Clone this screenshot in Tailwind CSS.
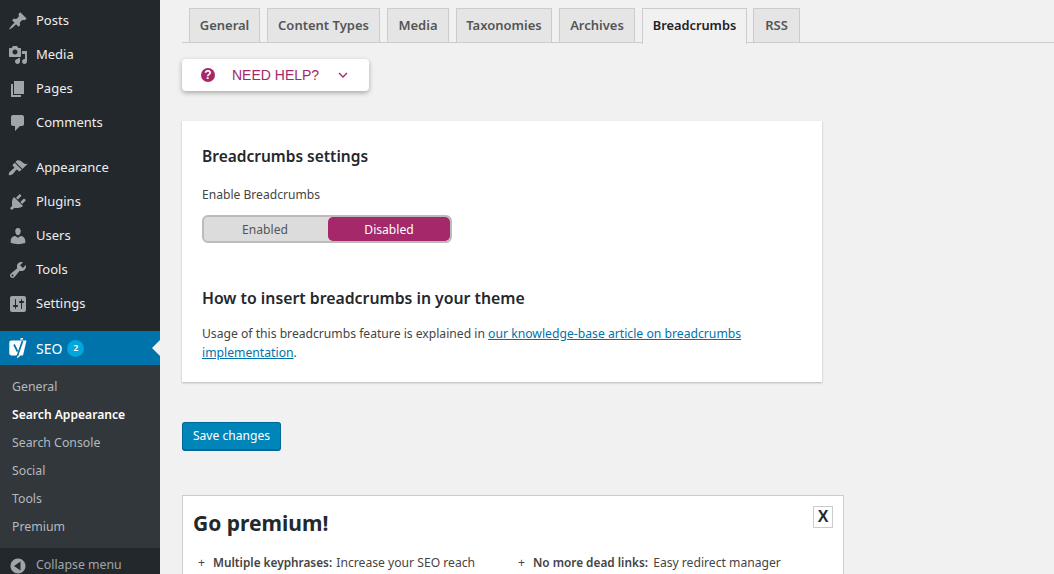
<!doctype html>
<html lang="en">
  <head>
    <meta charset="UTF-8" />
    <title>Search Appearance</title>
    <script src="https://cdn.jsdelivr.net/npm/@tailwindcss/browser@4"></script>
  </head>
  <body class="w-[1054px] h-[574px] overflow-hidden flex bg-[#f1f1f1] font-['Noto_Sans','Open_Sans',sans-serif] text-[12.100px] text-[#444]">
    <!-- admin menu -->
    <aside class="w-[160px] h-[574px] shrink-0 overflow-hidden bg-[#23282d] text-[13px] text-[#eee] pt-[4px]">
      <a class="h-[34px] flex items-center"><svg class="w-5 h-5 ml-[8px] mr-[8px] fill-[#a0a5aa]" viewBox="0 0 20 20"><path d="M10.44 3.02l1.82-1.82 6.36 6.35-1.83 1.82c-1.05-.68-2.48-.57-3.41.36l-.75.75c-.92.93-1.04 2.35-.35 3.41l-1.83 1.82-2.41-2.41-2.8 2.79c-.42.42-3.38 2.71-3.8 2.29s1.86-3.39 2.28-3.81l2.79-2.79L4.1 9.36l1.83-1.82c1.05.69 2.48.57 3.4-.36l.75-.75c.93-.92 1.05-2.35.36-3.41z"/></svg>Posts</a>
      <a class="h-[34px] flex items-center"><svg class="w-5 h-5 ml-[8px] mr-[8px] fill-[#a0a5aa]" viewBox="0 0 20 20"><path d="M13 11V4c0-.55-.45-1-1-1h-1.67L9 1H5L3.67 3H2c-.55 0-1 .45-1 1v7c0 .55.45 1 1 1h10c.55 0 1-.45 1-1zM7 4.5c1.38 0 2.5 1.12 2.5 2.5S8.38 9.5 7 9.5 4.5 8.38 4.5 7 5.62 4.5 7 4.5zM14 6h5v10.5c0 1.38-1.12 2.5-2.5 2.5S14 17.88 14 16.5s1.12-2.5 2.5-2.5c.17 0 .34.02.5.05V9h-3V6zm-4 8.05V13h2v3.5c0 1.38-1.12 2.5-2.5 2.5S7 17.88 7 16.5 8.12 14 9.5 14c.17 0 .34.02.5.05z"/></svg>Media</a>
      <a class="h-[34px] flex items-center"><svg class="w-5 h-5 ml-[8px] mr-[8px] fill-[#a0a5aa]" viewBox="0 0 20 20"><path d="M6 15V2h10v13H6zm-1 1h8v2H3V5h2v11z"/></svg>Pages</a>
      <a class="h-[34px] flex items-center"><svg class="w-5 h-5 ml-[8px] mr-[8px] fill-[#a0a5aa]" viewBox="0 0 20 20"><path d="M5 2h9c1.1 0 2 .9 2 2v7c0 1.1-.9 2-2 2h-2l-5 5v-5H5c-1.1 0-2-.9-2-2V4c0-1.1.9-2 2-2z"/></svg>Comments</a>
      <div class="h-[11px]"></div>
      <a class="h-[34px] flex items-center"><svg class="w-5 h-5 ml-[8px] mr-[8px] fill-[#a0a5aa]" viewBox="0 0 20 20"><path d="M14.48 11.06L7.41 3.99l1.5-1.5c.5-.56 2.3-.47 3.51.32 1.21.8 1.43 1.28 2.91 2.1 1.18.64 2.45 1.26 4.45.85zm-.71.71L6.7 4.7 4.93 6.47c-.39.39-.39 1.02 0 1.41l1.06 1.06c.39.39.39 1.03 0 1.42-.6.6-1.43 1.11-2.21 1.69-.35.26-.7.53-1.01.84C1.43 13.71 0 16.06 1 17c.94 1 3.3-.43 4.57-1.72.3-.31.57-.66.84-1.01.58-.78 1.09-1.61 1.69-2.21.39-.39 1.02-.39 1.41 0l1.06 1.06c.39.39 1.02.39 1.41 0z"/></svg>Appearance</a>
      <a class="h-[34px] flex items-center"><svg class="w-5 h-5 ml-[8px] mr-[8px] fill-[#a0a5aa]" viewBox="0 0 20 20"><path d="M13.11 4.36L9.87 7.6 8 5.73l3.24-3.24c.35-.34 1.05-.2 1.56.32.52.51.66 1.21.31 1.55zm-8 1.77l.91-1.12 9.01 9.01-1.19.84c-.71.71-2.63 1.16-3.82 1.16H6.14L4.9 17.26c-.59.59-1.54.59-2.12 0-.59-.58-.59-1.53 0-2.12l1.24-1.24v-3.88c0-1.13.4-3.19 1.09-3.89zm7.26 3.97l3.24-3.24c.34-.35 1.04-.21 1.55.31.52.51.66 1.21.31 1.55l-3.24 3.25z"/></svg>Plugins</a>
      <a class="h-[34px] flex items-center"><svg class="w-5 h-5 ml-[8px] mr-[8px] fill-[#a0a5aa]" viewBox="0 0 20 20"><path d="M10 9.25c-2.27 0-2.73-3.44-2.73-3.44C7 4.02 7.82 2 9.97 2c2.16 0 2.98 2.02 2.71 3.81 0 0-.41 3.44-2.68 3.44zm0 2.57L12.72 10c2.39 0 4.52 2.33 4.52 4.53v2.49s-3.65 1.13-7.24 1.13c-3.65 0-7.24-1.13-7.24-1.13v-2.49c0-2.25 1.94-4.48 4.47-4.48z"/></svg>Users</a>
      <a class="h-[34px] flex items-center"><svg class="w-5 h-5 ml-[8px] mr-[8px] fill-[#a0a5aa]" viewBox="0 0 20 20"><path d="M16.68 9.77c-1.34 1.34-3.3 1.67-4.95.99l-5.41 6.52c-.99.99-2.59.99-3.58 0s-.99-2.59 0-3.57l6.52-5.42c-.68-1.65-.35-3.61.99-4.95 1.28-1.28 3.12-1.62 4.72-1.06l-2.89 2.89 2.82 2.82 2.86-2.87c.53 1.58.18 3.39-1.08 4.65zM3.81 16.21c.4.39 1.04.39 1.43 0 .4-.4.4-1.04 0-1.43-.39-.4-1.03-.4-1.43 0-.39.39-.39 1.03 0 1.43z"/></svg>Tools</a>
      <a class="h-[34px] flex items-center"><svg class="w-5 h-5 ml-[8px] mr-[8px] fill-[#a0a5aa]" viewBox="0 0 20 20"><path fill-rule="evenodd" d="M18 16V4c0-1.1-.9-2-2-2H4c-1.1 0-2 .9-2 2v12c0 1.1.9 2 2 2h12c1.1 0 2-.9 2-2zM8 11h1c.55 0 1 .45 1 1s-.45 1-1 1H8v1.5c0 .28-.22.5-.5.5s-.5-.22-.5-.5V13H6c-.55 0-1-.45-1-1s.45-1 1-1h1V5.5c0-.28.22-.5.5-.5s.5.22.5.5V11zm5-2h-1c-.55 0-1-.45-1-1s.45-1 1-1h1V5.500c0-.28.22-.5.5-.5s.5.22.5.5V7h1c.55 0 1 .45 1 1s-.45 1-1 1h-1v5.500c0 .28-.22.5-.5.5s-.5-.22-.5-.5V9z"/></svg>Settings</a>
      <div class="h-[10px]"></div>
      <a class="relative h-[34px] flex items-center bg-[#0073aa] text-[14px] text-white">
        <!-- yoast mark -->
        <svg class="w-5 h-5 ml-[8px] mr-[8px]" viewBox="0 0 20 20"><path fill="#fff" d="M3.500 2.500h15l-3.500 15h-11.500c-1.300 0-2.200-.9-2.200-2.200V4.700c0-1.300.9-2.200 2.200-2.200z"/><path fill="#fff" d="M13 -.5h2.400l-.8 2.200h-2.400z"/><path fill="none" stroke="#0073aa" stroke-width="1.700" d="M6 6.500l3.500 7M14.500 3l-5 14.500c-.3.8-1.200 1.400-2.500 1.500"/><path fill="none" stroke="#fff" stroke-width="1.200" d="M9 19.300c1.500-.2 2.300-1 2.800-2.300"/></svg>
        SEO
        <span class="ml-[5px] w-[17px] h-[17px] rounded-full bg-[#00a6dc] text-[9px] font-semibold flex items-center justify-center">2</span>
        <span class="absolute right-0 top-[9px] border-y-[8px] border-y-transparent border-r-[8px] border-r-[#f1f1f1]"></span>
      </a>
      <nav class="h-[183px] pt-[8px] bg-[#32373c] text-[12.300px] text-[#b4b9be]">
        <a class="h-[28px] pl-[12px] flex items-center">General</a>
        <a class="h-[28px] pl-[12px] flex items-center font-semibold text-[12.100px] text-white">Search Appearance</a>
        <a class="h-[28px] pl-[12px] flex items-center">Search Console</a>
        <a class="h-[28px] pl-[12px] flex items-center">Social</a>
        <a class="h-[28px] pl-[12px] flex items-center">Tools</a>
        <a class="h-[28px] pl-[12px] flex items-center">Premium</a>
      </nav>
      <a class="h-[34px] pt-[1px] flex items-center text-[12.300px] text-[#a0a5aa]"><svg class="w-5 h-5 ml-[8px] mr-[8px] fill-[#a0a5aa]" viewBox="0 0 20 20"><path fill-rule="evenodd" d="M10 2.500c-4.100 0-7.500 3.400-7.500 7.500s3.400 7.500 7.500 7.500 7.500-3.400 7.500-7.500-3.400-7.500-7.500-7.500zM12.500 14.500L6 10l6.500-4.500z"/></svg>Collapse menu</a>
    </aside>

    <main class="flex-1 pl-[22px] pt-[8px] min-w-0">
      <!-- tabs -->
      <div class="h-[35px] flex pl-[7px] border-b border-[#ccc] font-semibold text-[13px] text-[#555]">
        <a class="w-[71px] h-[35px] mr-[7px] flex items-center justify-center bg-[#e5e5e5] border border-[#ccc]">General</a>
        <a class="w-[113px] h-[35px] mr-[7px] flex items-center justify-center bg-[#e5e5e5] border border-[#ccc]">Content Types</a>
        <a class="w-[62px] h-[35px] mr-[7px] flex items-center justify-center bg-[#e5e5e5] border border-[#ccc]">Media</a>
        <a class="w-[96px] h-[35px] mr-[7px] flex items-center justify-center bg-[#e5e5e5] border border-[#ccc]">Taxonomies</a>
        <a class="w-[76px] h-[35px] mr-[7px] flex items-center justify-center bg-[#e5e5e5] border border-[#ccc]">Archives</a>
        <a class="w-[105px] h-[36px] mr-[6px] pb-[1px] flex items-center justify-center bg-[#f1f1f1] border border-[#ccc] border-b-0 text-[12.800px] text-[#222]">Breadcrumbs</a>
        <a class="w-[47px] h-[35px] flex items-center justify-center bg-[#e5e5e5] border border-[#ccc]">RSS</a>
      </div>

      <!-- help -->
      <button class="mt-[16px] w-[187px] h-[32px] flex items-center bg-white rounded-[4px] shadow-[0_2px_5px_rgba(0,0,0,0.3)] text-[14px] text-[#a4286a] font-['Liberation_Sans',sans-serif]">
        <span class="ml-[19px] w-[14px] h-[14px] rounded-full bg-[#a4286a] text-white text-[12px] font-bold flex items-center justify-center">?</span>
        <span class="ml-[17px]">NEED HELP?</span>
        <svg class="ml-[18px] w-[12px] h-[12px] fill-none stroke-[#a4286a] stroke-[1.3]" viewBox="0 0 12 12"><path d="M2 4l4 4 4-4"/></svg>
      </button>

      <!-- settings card -->
      <section class="mt-[30px] w-[640px] h-[261px] px-[20px] bg-white shadow-[0_1px_2px_rgba(0,0,0,0.25)]">
        <h2 class="pt-[23px] text-[15.500px] leading-[24px] font-semibold text-[#23282d]">Breadcrumbs settings</h2>
        <p class="mt-[18px] text-[12.100px] leading-[18px]">Enable Breadcrumbs</p>
        <div class="mt-[11px] w-[250px] h-[28px] flex rounded-[6px] border-2 border-[#bbb] bg-[#dcdcdc] text-[12.100px]">
          <span class="w-[124px] pr-[2px] pt-[2px] flex items-center justify-center text-[#555]">Enabled</span>
          <span class="flex-1 pt-[2px] flex items-center justify-center rounded-[5px] bg-[#a4286a] text-white">Disabled</span>
        </div>
        <h2 class="mt-[43px] text-[15.800px] leading-[24px] font-semibold text-[#23282d]">How to insert breadcrumbs in your theme</h2>
        <p class="mt-[14px] text-[12.150px] leading-[19px]">Usage of this breadcrumbs feature is explained in <a class="text-[12.200px] text-[#0073aa] underline">our knowledge-base article on breadcrumbs implementation</a>.</p>
      </section>

      <button class="mt-[40px] pt-[1px] block w-[99px] h-[29px] bg-[#0085ba] border border-[#006799] border-b-2 rounded-[3px] text-[12.100px] text-white">Save changes</button>

      <!-- premium -->
      <section class="relative mt-[44px] w-[662px] h-[120px] px-[10px] bg-white border border-[#ccc]">
        <h2 class="pt-[13px] text-[21px] leading-[28px] font-bold text-[#23282d]">Go premium!</h2>
        <span class="absolute right-[10px] top-[10px] w-[20px] h-[22px] border border-[#ccc] flex items-center justify-center text-[16px] font-bold text-[#23282d] font-['Liberation_Sans',sans-serif]">X</span>
        <div class="mt-[16px] flex text-[12.150px] leading-[18px]">
          <p class="w-[320px] pl-[5px]"><span class="mr-[8px]">+</span><b class="mr-[1px] font-semibold text-[11.800px]">Multiple keyphrases:</b> Increase your SEO reach</p>
          <p class="pl-[5px]"><span class="mr-[8px]">+</span><b class="mr-[2px] font-semibold text-[11.800px]">No more dead links:</b> Easy redirect manager</p>
        </div>
      </section>
    </main>
  </body>
</html>
